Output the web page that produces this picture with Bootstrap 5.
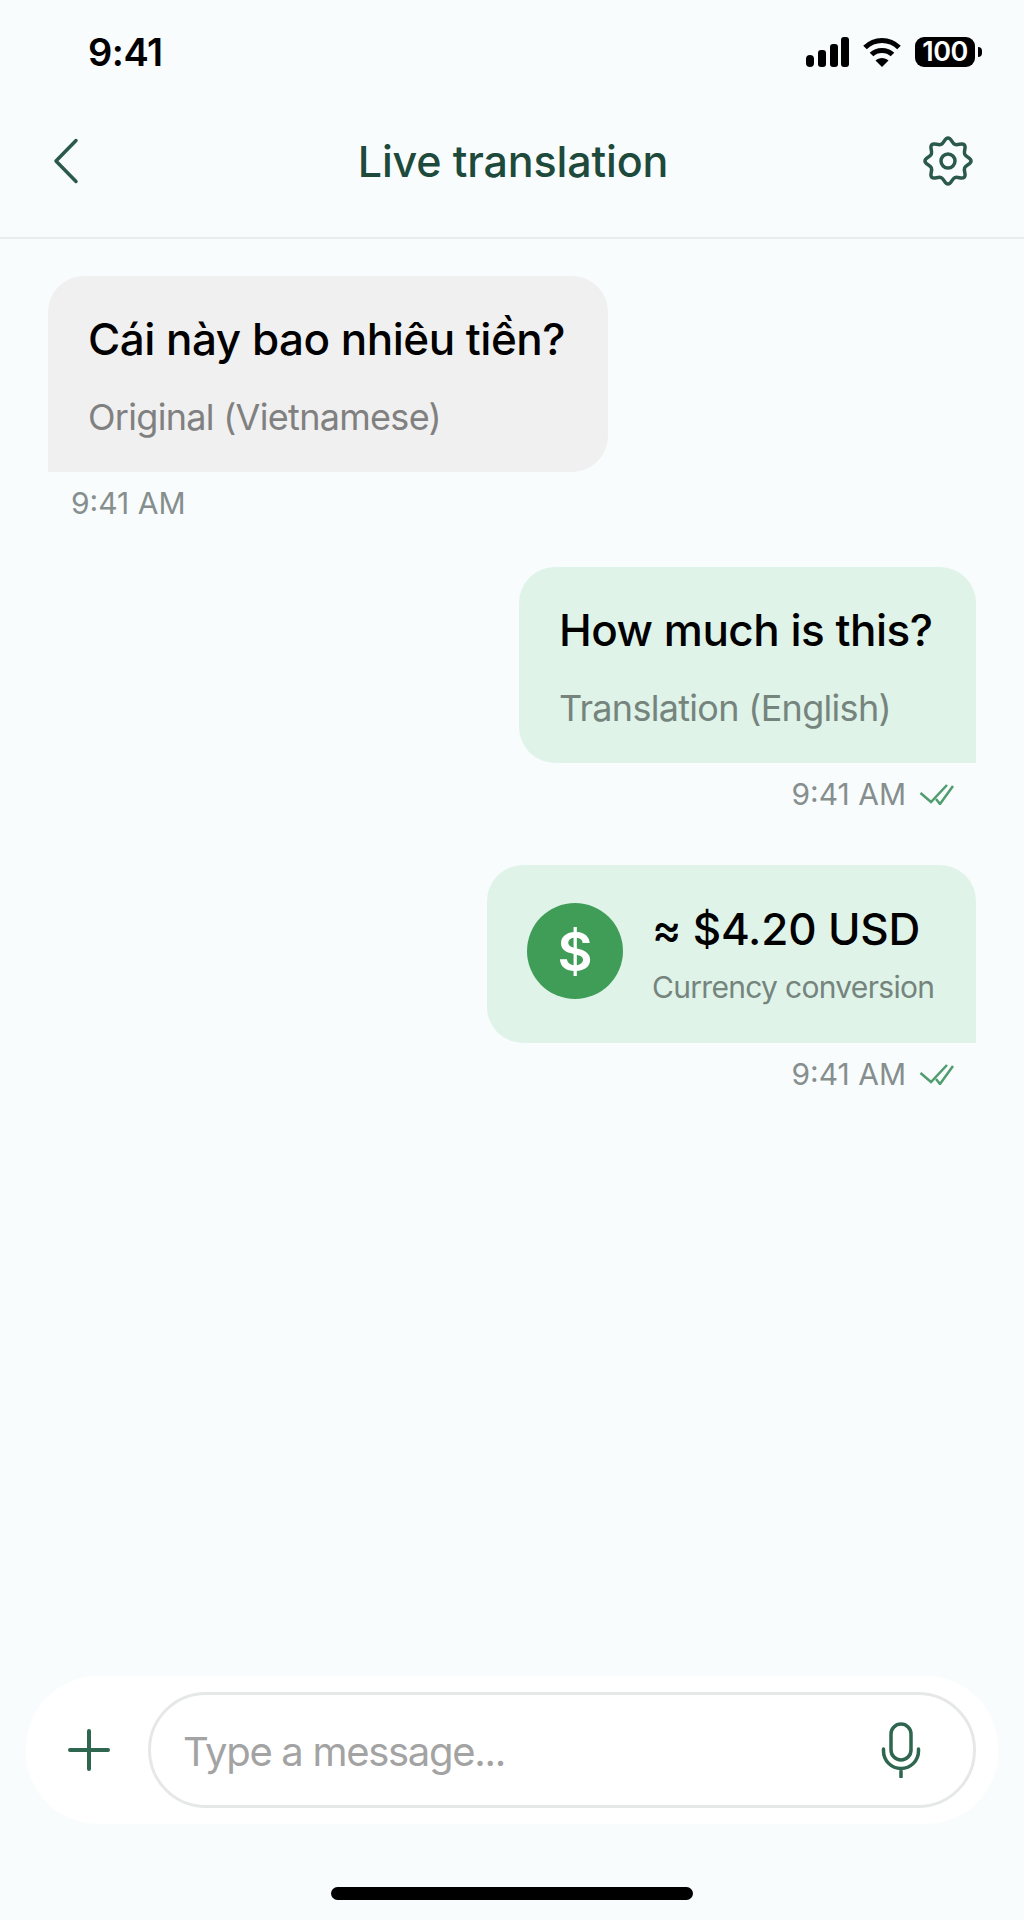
<!DOCTYPE html>
<html>
  <head>
    <title>Live translation</title>
    <link href="https://cdn.jsdelivr.net/npm/bootstrap@5.3.3/dist/css/bootstrap.min.css" rel="stylesheet" />
    <script src="https://cdn.jsdelivr.net/npm/bootstrap@5.3.3/dist/js/bootstrap.bundle.min.js"></script>
    <style>
      body {
        background: #f8fcfd;
        font-family: Inter, "Liberation Sans", sans-serif;
        color: #000;
      }
      .status-row {
        padding: 37px 49px 0 88px;
        height: 67px;
      }
      .clock {
        font-size: 38px;
        font-weight: 600;
        line-height: 30px;
        letter-spacing: -0.5px;
      }
      .status-icons {
        gap: 14px;
      }
      .battery {
        width: 60px;
        height: 30px;
        background: #000;
        color: #fff;
        border-radius: 9px;
        font-size: 27px;
        font-weight: 600;
        line-height: 30px;
        letter-spacing: -0.5px;
      }
      .battery::after {
        content: "";
        position: absolute;
        right: -7px;
        top: 10px;
        width: 4px;
        height: 10px;
        background: #000;
        border-radius: 0 4px 4px 0;
      }
      .top-head {
        padding: 68px 50px 50px 52px;
        border-bottom: 2px solid #e7ecec;
      }
      .top-head h1 {
        font-size: 43px;
        font-weight: 500;
        line-height: 52px;
        letter-spacing: -0.15px;
        color: #1e4a3b;
        margin: 0;
      }
      .back-slot {
        width: 52px;
      }
      .thread {
        padding: 37px 48px 0;
      }
      .bubble {
        padding: 35px 0 32px 40px;
        border-radius: 36px;
      }
      .bubble-in {
        background: #f0f0f0;
        width: 560px;
        border-bottom-left-radius: 0;
      }
      .bubble-out {
        background: #dff3e9;
        width: 457px;
        border-bottom-right-radius: 0;
      }
      .msg-main {
        font-size: 44px;
        font-weight: 500;
        line-height: 56px;
        letter-spacing: -0.5px;
      }
      .msg-sub {
        font-size: 36px;
        line-height: 46px;
        margin-top: 27px;
        letter-spacing: -0.7px;
        color: #808080;
      }
      .bubble-out .msg-sub {
        color: #75847d;
      }
      .stamp {
        font-size: 30px;
        line-height: 38px;
        margin-top: 12px;
        color: #868e8e;
      }
      .stamp-in {
        padding-left: 23px;
        margin-bottom: 45px;
      }
      .stamp-out {
        padding-right: 22px;
        gap: 14px;
        margin-bottom: 52px;
      }
      .price-bubble {
        width: 489px;
        padding: 38px 0 37px 40px;
        gap: 29px;
      }
      .dollar {
        width: 96px;
        height: 96px;
        background: #3f9d58;
        color: #fff;
        font-size: 54px;
        font-weight: 600;
      }
      .price {
        font-size: 44px;
        font-weight: 450;
        line-height: 52px;
        letter-spacing: -0.2px;
      }
      .price-note {
        font-size: 30px;
        line-height: 38px;
        margin-top: 13px;
        letter-spacing: -0.7px;
        color: #75847d;
      }
      .composer {
        margin: 0 26px;
        height: 148px;
        padding: 16px 22px 16px 42px;
        background: #fff;
        border-radius: 72px;
        gap: 38px;
      }
      .msg-field {
        height: 116px;
        border: 3px solid #e6e8e8;
        padding: 0 52px 0 32px;
        font-size: 40px;
        letter-spacing: -1.3px;
        color: #a3a3a3;
      }
      .msg-field span {
        padding-top: 3px;
      }
      .home-bar {
        width: 362px;
        height: 13px;
        margin: 63px auto 20px;
        background: #000;
      }
    </style>
  </head>
  <body>
    <div class="d-flex flex-column min-vh-100">
      <div class="status-row d-flex justify-content-between">
        <span class="clock">9:41</span>
        <div class="status-icons d-flex align-items-center">
          <svg width="43" height="30" viewBox="0 0 43 30" fill="#000">
            <rect x="0" y="18" width="8" height="12" rx="4" />
            <rect x="12" y="13" width="8" height="17" rx="3" />
            <rect x="24" y="7" width="8" height="23" rx="3" />
            <rect x="35" y="0" width="8" height="30" rx="3" />
          </svg>
          <svg width="38" height="30" viewBox="0 0 38 30" fill="none" stroke="#000" stroke-width="5">
            <path d="M2 10.5C11.5 1 26.5 1 36 10.5" />
            <path d="M8.5 17.5C14 12 24 12 29.500 17.500" />
            <path d="M19 30L12.500 23.500C16 20 22 20 25.500 23.500Z" fill="#000" stroke="none" />
          </svg>
          <div class="battery position-relative text-center">100</div>
        </div>
      </div>

      <div class="top-head d-flex justify-content-between align-items-center">
        <div class="back-slot">
          <svg class="d-block" width="27" height="48" viewBox="0 0 27 48" fill="none" stroke="#2b5a4a" stroke-width="3.500" stroke-linecap="round" stroke-linejoin="round">
            <path d="M24 3.500L4 24L24 44.500" />
          </svg>
        </div>
        <h1>Live translation</h1>
        <svg width="52" height="52" viewBox="-26 -26 52 52" fill="none" stroke="#2b5a4a" stroke-width="3.500" stroke-linejoin="round">
          <path d="M0,-23C3.500,-23 3.660,-17.970 6.890,-16.630C10.120,-15.290 13.790,-18.730 16.260,-16.260C18.730,-13.790 15.290,-10.120 16.630,-6.890C17.970,-3.660 23,-3.500 23,0C23,3.500 17.970,3.660 16.630,6.890C15.290,10.120 18.730,13.790 16.260,16.260C13.790,18.730 10.120,15.290 6.890,16.630C3.660,17.970 3.500,23 0,23C-3.500,23 -3.660,17.970 -6.890,16.630C-10.120,15.290 -13.790,18.730 -16.260,16.260C-18.730,13.790 -15.290,10.120 -16.630,6.890C-17.970,3.660 -23,3.500 -23,0C-23,-3.500 -17.970,-3.660 -16.630,-6.890C-15.290,-10.120 -18.730,-13.790 -16.260,-16.260C-13.790,-18.730 -10.120,-15.290 -6.890,-16.630C-3.660,-17.970 -3.500,-23 0,-23Z" />
          <circle r="7" />
        </svg>
      </div>

      <div class="thread">
        <div class="bubble bubble-in">
          <div class="msg-main">Cái này bao nhiêu tiền?</div>
          <div class="msg-sub">Original (Vietnamese)</div>
        </div>
        <div class="stamp stamp-in">9:41 AM</div>

        <div class="d-flex justify-content-end">
          <div class="bubble bubble-out">
            <div class="msg-main">How much is this?</div>
            <div class="msg-sub">Translation (English)</div>
          </div>
        </div>
        <div class="stamp stamp-out d-flex justify-content-end align-items-center">
          <span>9:41 AM</span>
          <svg width="34" height="21" viewBox="0 0 34 21" fill="none" stroke="#4f9d6f" stroke-width="2.500">
            <path d="M0.500 9L11 18L27 1" />
            <path d="M16 15L20 20L33 2" />
          </svg>
        </div>

        <div class="d-flex justify-content-end">
          <div class="bubble bubble-out price-bubble d-flex">
            <div class="dollar rounded-circle d-flex justify-content-center align-items-center">$</div>
            <div>
              <div class="price">≈ $4.20 USD</div>
              <div class="price-note">Currency conversion</div>
            </div>
          </div>
        </div>
        <div class="stamp stamp-out d-flex justify-content-end align-items-center mb-0">
          <span>9:41 AM</span>
          <svg width="34" height="21" viewBox="0 0 34 21" fill="none" stroke="#4f9d6f" stroke-width="2.500">
            <path d="M0.500 9L11 18L27 1" />
            <path d="M16 15L20 20L33 2" />
          </svg>
        </div>
      </div>

      <div class="composer mt-auto d-flex align-items-center">
        <svg class="flex-shrink-0" width="42" height="42" viewBox="0 0 42 42" fill="none" stroke="#2f6650" stroke-width="4" stroke-linecap="round">
          <path d="M21 2V40M2 21H40" />
        </svg>
        <div class="msg-field flex-grow-1 rounded-pill d-flex justify-content-between align-items-center">
          <span>Type a message...</span>
          <svg width="40" height="56" viewBox="0 0 40 56" fill="none" stroke="#2f6650" stroke-width="3.500" stroke-linecap="round">
            <rect x="10" y="2" width="20" height="36" rx="10" />
            <path d="M2.500 27V29A17.500 17.500 0 0 0 37.500 29V27M20 47V55" />
          </svg>
        </div>
      </div>
      <div class="home-bar rounded-pill"></div>
    </div>
  </body>
</html>
